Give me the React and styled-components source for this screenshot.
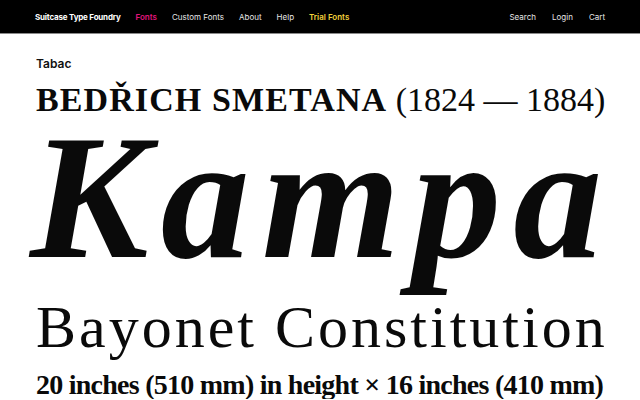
import React from "react";
import styled, { createGlobalStyle } from "styled-components";

const GlobalStyle = createGlobalStyle`
  html, body {
    margin: 0;
    padding: 0;
    background: #fff;
  }
  body {
    font-family: Inter, "Liberation Sans", sans-serif;
    overflow: hidden;
  }
`;

const NavBar = styled.nav`
  display: flex;
  align-items: center;
  height: 33px;
  padding: 0 35px;
  background: #000;
  border-bottom: 1px solid #8a8a8a;
  font-size: 8px;
`;

const NavGroup = styled.div`
  display: flex;
  align-items: center;
  gap: ${({ gap }) => gap || 16}px;
`;

const Spacer = styled.div`
  flex: 1;
`;

const NavLink = styled.a`
  color: ${({ tone }) =>
    tone === "pink" ? "#e0157d" : tone === "yellow" ? "#f2d13c" : "#e6e6e6"};
  font-weight: ${({ strong }) => (strong ? 600 : 400)};
  text-decoration: none;
  white-space: nowrap;
`;

const Brand = styled(NavLink)`
  color: #fff;
  font-weight: 700;
  letter-spacing: -0.2px;
`;

const Page = styled.main`
  padding: 22px 36px 0;
`;

const Label = styled.div`
  font-family: Inter, "Liberation Sans", sans-serif;
  font-size: 12px;
  font-weight: 600;
  color: #111;
  margin-bottom: 12px;
`;

const Line = styled.div`
  font-family: "Liberation Serif", "DejaVu Serif", serif;
  color: #0a0a0a;
  white-space: nowrap;
  line-height: 1;
`;

const Heading = styled(Line)`
  font-size: 34px;
`;

const Caps = styled.span`
  font-weight: 700;
  letter-spacing: 1.1px;
`;

const Years = styled.span`
  font-weight: 400;
`;

const Title = styled(Line)`
  font-size: 178px;
  font-weight: 700;
  font-style: italic;
  letter-spacing: 12px;
  margin-left: -6px;
  line-height: 0.9;
`;

const Subtitle = styled(Line)`
  font-size: 60px;
  letter-spacing: 3px;
  margin-top: 20px;
`;

const Dimensions = styled(Line)`
  font-size: 28px;
  font-weight: 700;
  letter-spacing: -0.75px;
  margin-top: 14px;
`;

export default function App() {
  return (
    <>
      <GlobalStyle />
      <NavBar>
        <NavGroup gap={15}>
          <Brand href="#">Suitcase Type Foundry</Brand>
          <NavLink href="#" tone="pink" strong>Fonts</NavLink>
          <NavLink href="#">Custom Fonts</NavLink>
          <NavLink href="#">About</NavLink>
          <NavLink href="#">Help</NavLink>
          <NavLink href="#" tone="yellow" strong>Trial Fonts</NavLink>
        </NavGroup>
        <Spacer />
        <NavGroup>
          <NavLink href="#">Search</NavLink>
          <NavLink href="#">Login</NavLink>
          <NavLink href="#">Cart</NavLink>
        </NavGroup>
      </NavBar>
      <Page>
        <Label>Tabac</Label>
        <Heading>
          <Caps>BEDŘICH SMETANA</Caps> <Years>(1824 — 1884)</Years>
        </Heading>
        <Title>Kampa</Title>
        <Subtitle>Bayonet Constitution</Subtitle>
        <Dimensions>20 inches (510 mm) in height × 16 inches (410 mm)</Dimensions>
      </Page>
    </>
  );
}
